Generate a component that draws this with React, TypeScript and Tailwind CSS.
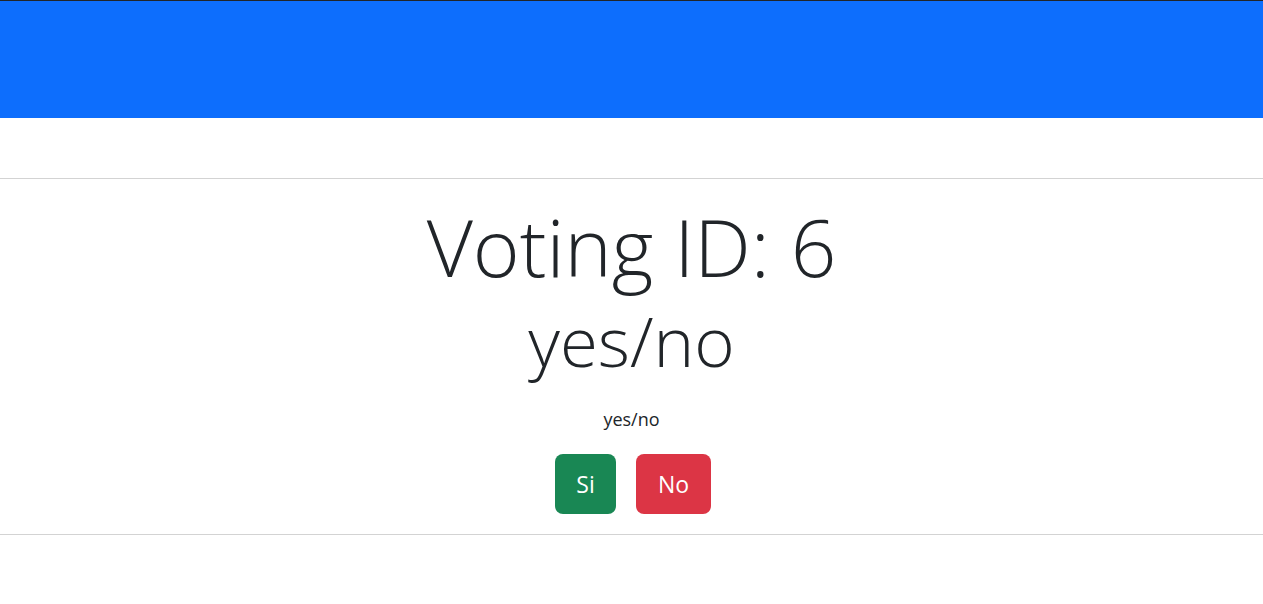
export default function App() {
  const font = { fontFamily: '"Open Sans", "Noto Sans", sans-serif' };
  return (
    <div className="min-h-[604px] bg-white text-[#212529]" style={font}>
      <div className="h-[118px] border-t border-[#212529] bg-[#0d6efd]" />
      <div className="h-[60px]" />
      <hr className="border-0 border-t border-[#d3d3d3]" />
      <div className="flex flex-col items-center">
        <h1 className="mt-[19px] text-[80px] font-light leading-[96px]">Voting ID: 6</h1>
        <h2 className="mt-[5px] text-[69px] font-light leading-[83px]">yes/no</h2>
        <p className="mt-[24px] text-[18px] leading-[27px]">yes/no</p>
        <div className="ml-[3px] mt-[21px] flex gap-[20px]">
          <button className="h-[60px] w-[61px] rounded-[8px] bg-[#198754] text-[23px] text-white">Si</button>
          <button className="h-[60px] w-[75px] rounded-[8px] bg-[#dc3545] text-[23px] text-white">No</button>
        </div>
      </div>
      <hr className="mt-[20px] border-0 border-t border-[#d3d3d3]" />
    </div>
  );
}
